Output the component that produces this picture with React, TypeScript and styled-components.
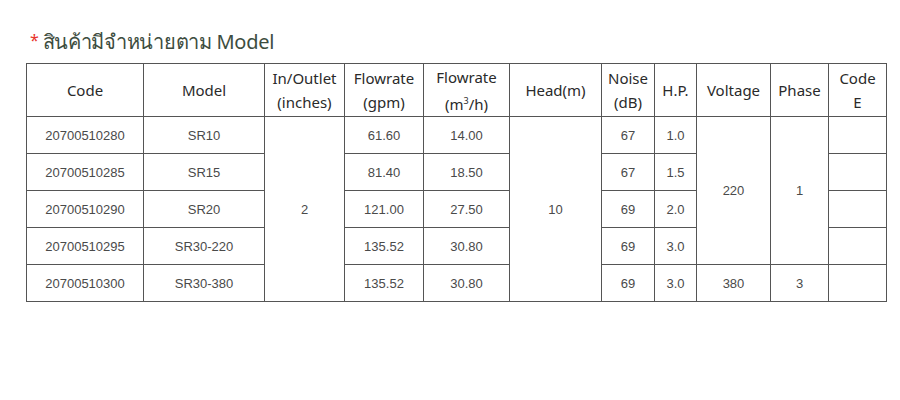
import React from 'react';
import styled, { createGlobalStyle } from 'styled-components';

const GlobalStyle = createGlobalStyle`
  html, body {
    margin: 0;
    padding: 0;
    background: #ffffff;
  }
`;

const Page = styled.div`
  width: 900px;
  height: 400px;
  padding: 26px 0 0 26px;
  box-sizing: border-box;
  font-family: "Noto Sans", "DejaVu Sans", sans-serif;
`;

const Title = styled.h2`
  margin: 0 0 7px 4px;
  font-size: 20px;
  font-weight: 400;
  line-height: 29px;
  letter-spacing: -0.3px;
  color: #3d4d40;
`;

const Star = styled.span`
  color: #e8332b;
  font-size: 16px;
  vertical-align: 3px;
  margin-right: 4px;
`;

const Table = styled.table`
  border-collapse: collapse;
  table-layout: fixed;
  width: 860px;
`;

const Col = styled.col<{ $w: number }>`
  width: ${p => p.$w}px;
`;

const HeadCell = styled.th`
  border: 1px solid #555;
  height: 52px;
  padding: 0;
  font-size: 15px;
  font-weight: 400;
  line-height: 24px;
  color: #2a2a2a;
  text-align: center;
  vertical-align: middle;
`;

const Cell = styled.td`
  border: 1px solid #555;
  height: 36px;
  padding: 0;
  font-family: "Liberation Sans", sans-serif;
  font-size: 13px;
  color: #4a4a4a;
  text-align: center;
  vertical-align: middle;
`;

const Sup = styled.sup`
  font-size: 9px;
`;

const widths = [117, 121, 80, 79, 86, 92, 53, 42, 74, 58, 58];

type Row = { code: string; model: string; gpm: string; m3: string; noise: string; hp: string };

const rows: Row[] = [
  { code: '20700510280', model: 'SR10', gpm: '61.60', m3: '14.00', noise: '67', hp: '1.0' },
  { code: '20700510285', model: 'SR15', gpm: '81.40', m3: '18.50', noise: '67', hp: '1.5' },
  { code: '20700510290', model: 'SR20', gpm: '121.00', m3: '27.50', noise: '69', hp: '2.0' },
  { code: '20700510295', model: 'SR30-220', gpm: '135.52', m3: '30.80', noise: '69', hp: '3.0' },
  { code: '20700510300', model: 'SR30-380', gpm: '135.52', m3: '30.80', noise: '69', hp: '3.0' },
];

export default function App() {
  return (
    <>
      <GlobalStyle />
      <Page>
        <Title>
          <Star>*</Star>สินค้ามีจำหน่ายตาม Model
        </Title>
        <Table>
          <colgroup>
            {widths.map((w, i) => (
              <Col key={i} $w={w} />
            ))}
          </colgroup>
          <thead>
            <tr>
              <HeadCell>Code</HeadCell>
              <HeadCell>Model</HeadCell>
              <HeadCell>In/Outlet<br />(inches)</HeadCell>
              <HeadCell>Flowrate<br />(gpm)</HeadCell>
              <HeadCell>Flowrate<br />(m<Sup>3</Sup>/h)</HeadCell>
              <HeadCell>Head(m)</HeadCell>
              <HeadCell>Noise<br />(dB)</HeadCell>
              <HeadCell>H.P.</HeadCell>
              <HeadCell>Voltage</HeadCell>
              <HeadCell>Phase</HeadCell>
              <HeadCell>Code<br />E</HeadCell>
            </tr>
          </thead>
          <tbody>
            {rows.map((r, i) => (
              <tr key={r.code}>
                <Cell>{r.code}</Cell>
                <Cell>{r.model}</Cell>
                {i === 0 && <Cell rowSpan={5}>2</Cell>}
                <Cell>{r.gpm}</Cell>
                <Cell>{r.m3}</Cell>
                {i === 0 && <Cell rowSpan={5}>10</Cell>}
                <Cell>{r.noise}</Cell>
                <Cell>{r.hp}</Cell>
                {i === 0 && <Cell rowSpan={4}>220</Cell>}
                {i === 0 && <Cell rowSpan={4}>1</Cell>}
                {i === 4 && <Cell>380</Cell>}
                {i === 4 && <Cell>3</Cell>}
                <Cell></Cell>
              </tr>
            ))}
          </tbody>
        </Table>
      </Page>
    </>
  );
}
